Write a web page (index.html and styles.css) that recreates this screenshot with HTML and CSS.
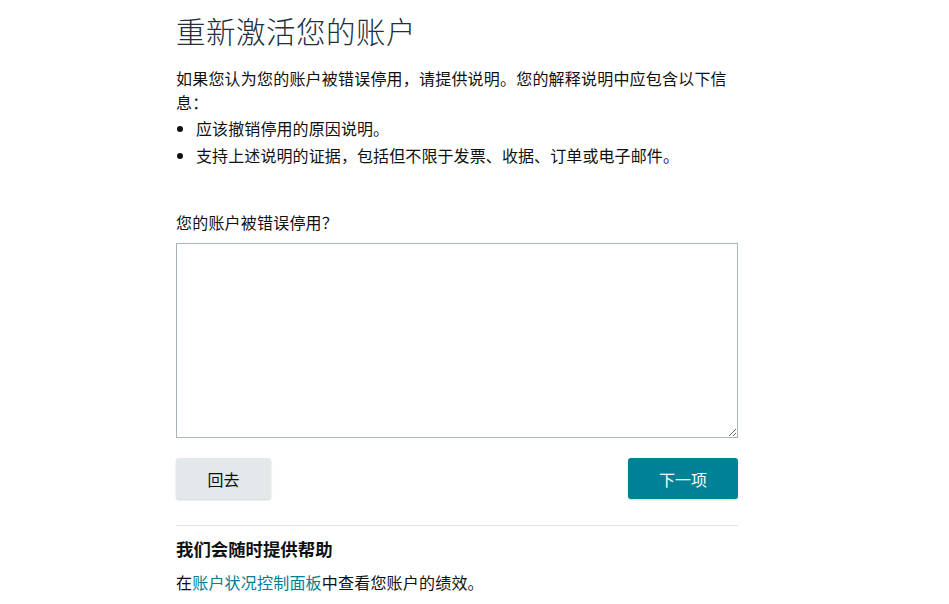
FILE: index.html
```html
<!DOCTYPE html>
<html lang="zh-CN">
<head>
<meta charset="utf-8">
<title>重新激活您的账户</title>
<link rel="stylesheet" href="styles.css">
</head>
<body>
<main class="page">
  <h1 class="title">重新激活您的账户</h1>
  <p class="intro">如果您认为您的账户被错误停用，请提供说明。您的解释说明中应包含以下信息：</p>
  <ul class="points">
    <li>应该撤销停用的原因说明。</li>
    <li>支持上述说明的证据，包括但不限于发票、收据、订单或电子邮件。</li>
  </ul>
  <label class="field-label" for="reason">您的账户被错误停用？</label>
  <textarea id="reason" class="field"></textarea>
  <div class="actions">
    <button class="btn btn-back" type="button">回去</button>
    <button class="btn btn-next" type="button">下一项</button>
  </div>
  <hr class="divider">
  <h4 class="help-title">我们会随时提供帮助</h4>
  <p class="help-text">在<a class="link" href="#">账户状况控制面板</a>中查看您账户的绩效。</p>
</main>
</body>
</html>
```

FILE: styles.css
```css
html, body {
  margin: 0;
  padding: 0;
  background: #ffffff;
}
body {
  font-family: "Noto Sans CJK SC", "Noto Sans", "Liberation Sans", sans-serif;
  color: #0f1111;
}
.page {
  width: 562px;
  padding: 10px 0 0 176px;
}
.title {
  margin: 0;
  font-size: 29.5px;
  line-height: 40px;
  font-weight: 300;
  color: #232f3e;
  letter-spacing: 0.5px;
}
.intro {
  margin: 16px 0 0;
  font-size: 16px;
  line-height: 24px;
  letter-spacing: 0.2px;
  color: #0f1111;
}
.points {
  margin: 2px 0 0;
  padding: 0 0 0 20px;
  font-size: 16px;
  line-height: 24px;
  letter-spacing: 0.1px;
}
.points li + li {
  margin-top: 3px;
}
.field-label {
  display: block;
  margin-top: 45px;
  font-size: 16px;
  line-height: 20px;
  letter-spacing: 0.2px;
  color: #0f1111;
}
.field {
  display: block;
  box-sizing: border-box;
  width: 562px;
  height: 195px;
  margin: 11px 0 0;
  border: 1px solid #a6b6ba;
  border-radius: 0;
  padding: 6px;
  font: inherit;
}
.actions {
  display: flex;
  justify-content: space-between;
  margin-top: 20px;
}
.btn {
  height: 41px;
  border: none;
  border-radius: 3px;
  font-family: inherit;
  font-size: 16px;
  box-shadow: 0 1px 2px rgba(0, 0, 0, 0.18);
  cursor: pointer;
}
.btn-back {
  width: 95px;
  background: #e3e9ea;
  color: #0f1111;
}
.btn-next {
  width: 110px;
  background: #008296;
  color: #ffffff;
}
.divider {
  margin: 26px 0 0;
  border: none;
  border-top: 1px solid #dde2e3;
  height: 0;
}
.help-title {
  margin: 11px 0 0;
  font-size: 17.4px;
  line-height: 24px;
  font-weight: 700;
  color: #0f1111;
}
.help-text {
  margin: 9px 0 0;
  font-size: 16px;
  line-height: 24px;
  letter-spacing: 0.2px;
  color: #0f1111;
}
.link {
  color: #007e92;
  text-decoration: none;
}
```
